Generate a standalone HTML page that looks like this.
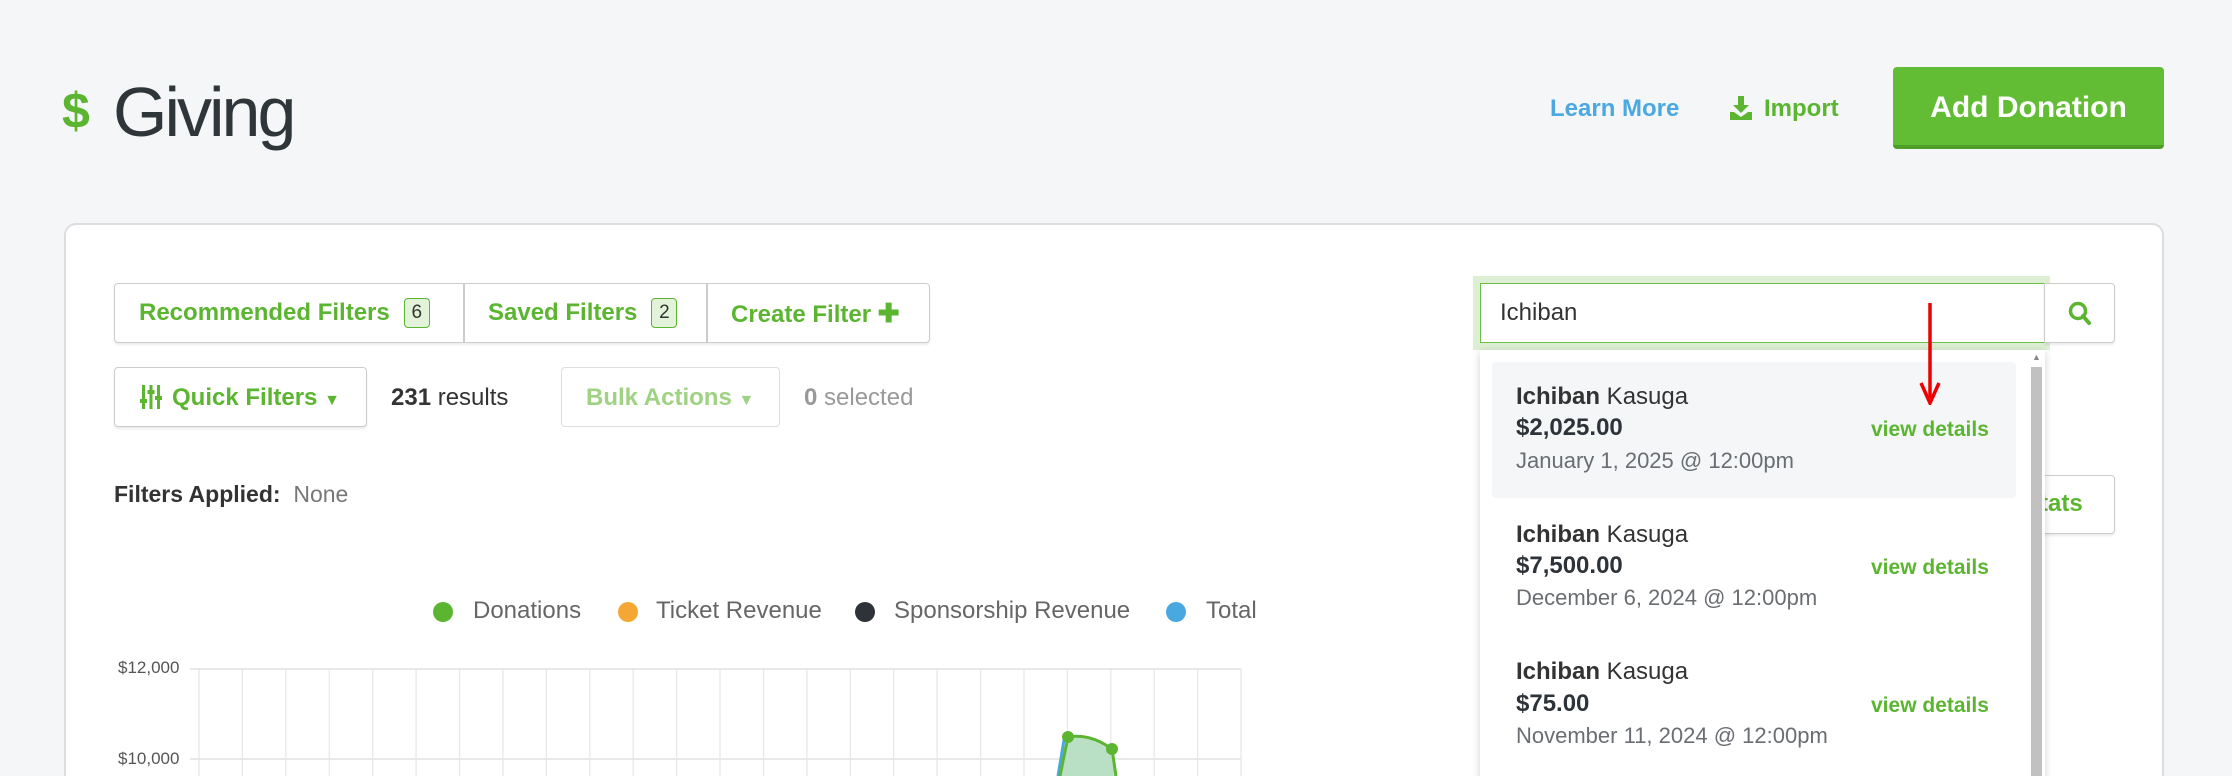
<!DOCTYPE html>
<html style="overflow:hidden;height:776px"><head><meta charset="utf-8"><style>
*{margin:0;padding:0;box-sizing:border-box}
body{width:2232px;height:776px;overflow:hidden;background:#f5f6f8;font-family:"Liberation Sans",sans-serif;position:relative;color:#333}
.a{position:absolute;white-space:nowrap}
.g{color:#5cb531}
.card{position:absolute;left:64px;top:223px;width:2100px;height:560px;background:#fff;border:2px solid #dcdde0;border-bottom:none;border-radius:12px 12px 0 0}
.btn{position:absolute;border:1.5px solid #ccc;border-radius:4px;background:#fff;box-shadow:0 2px 2px rgba(0,0,0,.08)}
.badge{display:inline-block;border:1.5px solid #5cb531;background:#e3f3da;color:#333;border-radius:4px;font-size:19px;width:26px;height:30px;line-height:27px;text-align:center;font-weight:normal;vertical-align:2px;margin-left:14px}
.ft{font-size:24px;font-weight:bold;color:#5cb531}
.it .n{font-size:24px;color:#333}
.it .m{font-size:24px;font-weight:bold;color:#2d3338}
.it .d{font-size:22px;color:#6a6e72}
.vd{font-size:21px;color:#5cb531;font-weight:bold}
.lg{font-size:24px;color:#666;top:597px}
.dot{position:absolute;width:20px;height:20px;border-radius:50%;top:602px}
</style></head><body>
<div class="a g" style="left:62px;top:82px;font-size:50px;font-weight:bold">$</div>
<div class="a" style="left:113px;top:72px;font-size:70px;color:#2f3639;letter-spacing:-3px">Giving</div>
<div class="a" style="left:1550px;top:95px;font-size:24px;font-weight:bold;color:#4ba8e0">Learn More</div>
<svg class="a" style="left:1730px;top:96px" width="22" height="24" viewBox="0 0 22 24"><path d="M8 0h6v9h5l-8 8-8-8h5z M0 16h4l7 5 7-5h4v8H0z" fill="#5cb531"/></svg>
<div class="a g" style="left:1764px;top:95px;font-size:24px;font-weight:bold">Import</div>
<div class="a" style="left:1893px;top:67px;width:271px;height:82px;background:#62bd34;border-radius:4px;border-bottom:4px solid #4f9e28;color:#fff;font-size:30px;font-weight:bold;text-align:center;line-height:82px">Add Donation</div>
<div class="card"></div>
<div class="btn" style="left:114px;top:283px;width:816px;height:60px"></div>
<div class="a" style="left:463px;top:284px;width:1.5px;height:58px;background:#ccc"></div>
<div class="a" style="left:706px;top:284px;width:1.5px;height:58px;background:#ccc"></div>
<div class="a ft" style="left:139px;top:298px">Recommended Filters<span class="badge">6</span></div>
<div class="a ft" style="left:488px;top:298px">Saved Filters<span class="badge">2</span></div>
<div class="a ft" style="left:731px;top:298px">Create Filter <span style="font-size:26px">✚</span></div>
<div class="btn" style="left:114px;top:367px;width:253px;height:60px"></div>
<svg class="a" style="left:140px;top:385px" width="22" height="24" viewBox="0 0 22 24"><g fill="#5cb531"><rect x="2" y="0" width="3" height="24"/><rect x="9.5" y="0" width="3" height="24"/><rect x="17" y="0" width="3" height="24"/><rect x="0" y="14" width="7" height="4"/><rect x="7.5" y="5" width="7" height="4"/><rect x="15" y="11" width="7" height="4"/></g></svg>
<div class="a ft" style="left:172px;top:384px">Quick Filters <span style="font-size:16px">▼</span></div>
<div class="a" style="left:391px;top:384px;font-size:24px"><b>231</b> results</div>
<div class="btn" style="left:561px;top:367px;width:219px;height:60px;border-color:#ddd;box-shadow:none"></div>
<div class="a ft" style="left:586px;top:384px;color:#9fd282">Bulk Actions <span style="font-size:16px">▼</span></div>
<div class="a" style="left:804px;top:384px;font-size:24px;color:#999"><b>0</b> selected</div>
<div class="a" style="left:114px;top:481px;font-size:23px;color:#333"><b>Filters Applied:</b>&nbsp; <span style="color:#777">None</span></div>
<div class="dot" style="left:433px;background:#5cb531"></div><div class="a lg" style="left:473px">Donations</div>
<div class="dot" style="left:618px;background:#f4a733"></div><div class="a lg" style="left:656px">Ticket Revenue</div>
<div class="dot" style="left:855px;background:#2d3338"></div><div class="a lg" style="left:894px">Sponsorship Revenue</div>
<div class="dot" style="left:1166px;background:#4aa8e0"></div><div class="a lg" style="left:1206px">Total</div>
<div class="a" style="left:118px;top:658px;font-size:17px;color:#555">$12,000</div>
<div class="a" style="left:118px;top:749px;font-size:17px;color:#555">$10,000</div>
<svg class="a" style="left:0;top:0" width="1300" height="776">
<g stroke="#e2e2e2" stroke-width="1.5">
<line x1="190" y1="669" x2="1241" y2="669"/><line x1="190" y1="759" x2="1241" y2="759"/>
</g>
<g stroke="#e6e6e6" stroke-width="1.2">
<line x1="199" y1="669" x2="199" y2="776"/><line x1="242.4" y1="669" x2="242.4" y2="776"/><line x1="285.8" y1="669" x2="285.8" y2="776"/><line x1="329.3" y1="669" x2="329.3" y2="776"/><line x1="372.7" y1="669" x2="372.7" y2="776"/><line x1="416.1" y1="669" x2="416.1" y2="776"/><line x1="459.5" y1="669" x2="459.5" y2="776"/><line x1="502.9" y1="669" x2="502.9" y2="776"/><line x1="546.4" y1="669" x2="546.4" y2="776"/><line x1="589.8" y1="669" x2="589.8" y2="776"/><line x1="633.2" y1="669" x2="633.2" y2="776"/><line x1="676.6" y1="669" x2="676.6" y2="776"/><line x1="720" y1="669" x2="720" y2="776"/><line x1="763.5" y1="669" x2="763.5" y2="776"/><line x1="806.9" y1="669" x2="806.9" y2="776"/><line x1="850.3" y1="669" x2="850.3" y2="776"/><line x1="893.7" y1="669" x2="893.7" y2="776"/><line x1="937.1" y1="669" x2="937.1" y2="776"/><line x1="980.6" y1="669" x2="980.6" y2="776"/><line x1="1024" y1="669" x2="1024" y2="776"/><line x1="1067.4" y1="669" x2="1067.4" y2="776"/><line x1="1110.8" y1="669" x2="1110.8" y2="776"/><line x1="1154.2" y1="669" x2="1154.2" y2="776"/><line x1="1197.7" y1="669" x2="1197.7" y2="776"/><line x1="1241" y1="669" x2="1241" y2="776"/>
</g>
<path d="M1060 776 L1068 737 Q1090 733 1112 749 L1116 776Z" fill="#b9e0c4"/>
<path d="M1058 776 L1064 740" stroke="#4aa8e0" stroke-width="3" fill="none"/>
<path d="M1060 776 L1068 737 Q1090 733 1112 749 L1116 776" stroke="#5cb531" stroke-width="3" fill="none"/>
<circle cx="1068" cy="737" r="6" fill="#5cb531"/><circle cx="1112" cy="749" r="6" fill="#5cb531"/>
</svg>
<div class="btn" style="left:2035px;top:475px;width:80px;height:59px"></div>
<div class="a ft" style="left:2040px;top:490px">tats</div>
<div class="a" style="left:1473px;top:276px;width:577px;height:74px;background:#dcefd2"></div>
<div class="a" style="left:1480px;top:283px;width:565px;height:60px;background:#fff;border:1.5px solid #6cbf44"></div>
<div class="a" style="left:1500px;top:299px;font-size:24px;color:#333">Ichiban</div>
<div class="btn" style="left:2044px;top:283px;width:71px;height:60px;border-radius:0 4px 4px 0"></div>
<svg class="a" style="left:2068px;top:301px" width="24" height="26" viewBox="0 0 24 26"><circle cx="10" cy="10" r="7.5" stroke="#5cb531" stroke-width="3.5" fill="none"/><path d="M15 15l6 7" stroke="#5cb531" stroke-width="4" stroke-linecap="round"/></svg>
<div class="a" style="left:1480px;top:350px;width:565px;height:430px;background:#fff;box-shadow:0 2px 8px rgba(0,0,0,.18)"></div>
<div class="a" style="left:2031px;top:367px;width:11px;height:420px;background:#c1c1c1"></div>
<div class="a" style="left:2032px;top:352px;font-size:9px;color:#888">▲</div>
<div class="a" style="left:1492px;top:362px;width:524px;height:136px;background:#f4f6f8;border-radius:4px"></div>
<div class="it">
<div class="a n" style="left:1516px;top:383px"><b>Ichiban</b> Kasuga</div>
<div class="a m" style="left:1516px;top:414px">$2,025.00</div>
<div class="a d" style="left:1516px;top:448px">January 1, 2025 @ 12:00pm</div>
<div class="a vd" style="left:1871px;top:418px">view details</div>
<div class="a n" style="left:1516px;top:521px"><b>Ichiban</b> Kasuga</div>
<div class="a m" style="left:1516px;top:552px">$7,500.00</div>
<div class="a d" style="left:1516px;top:585px">December 6, 2024 @ 12:00pm</div>
<div class="a vd" style="left:1871px;top:556px">view details</div>
<div class="a n" style="left:1516px;top:658px"><b>Ichiban</b> Kasuga</div>
<div class="a m" style="left:1516px;top:690px">$75.00</div>
<div class="a d" style="left:1516px;top:723px">November 11, 2024 @ 12:00pm</div>
<div class="a vd" style="left:1871px;top:694px">view details</div>
</div>
<svg class="a" style="left:1918px;top:303px" width="24" height="102" viewBox="0 0 24 102"><path d="M12 0V95" stroke="#e00" stroke-width="3.5"/><path d="M3 80L12 100L21 80" stroke="#e00" stroke-width="3.5" fill="none"/></svg>
</body></html>
